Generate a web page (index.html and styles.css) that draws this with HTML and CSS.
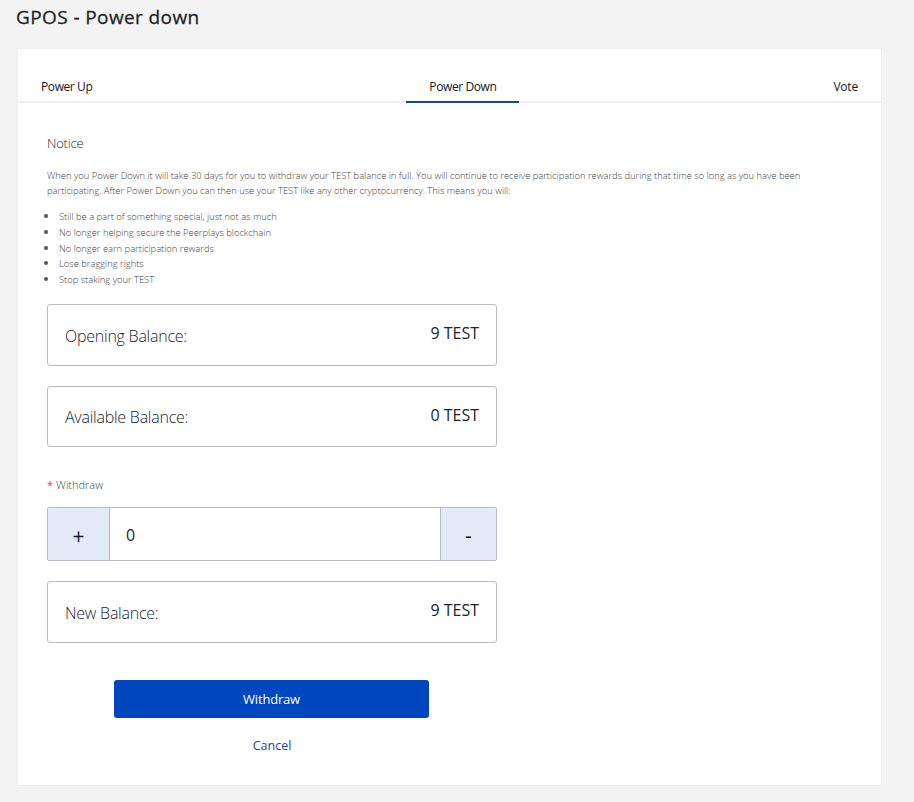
FILE: index.html
```html
<!DOCTYPE html>
<html lang="en">
<head>
<meta charset="utf-8">
<title>GPOS - Power down</title>
<link rel="stylesheet" href="styles.css">
</head>
<body>
<h1 class="title"><span>GPOS - Power down</span></h1>
<main class="card">
  <nav class="tabs">
    <a class="tab up">Power Up</a>
    <a class="tab down active">Power Down</a>
    <a class="tab vote">Vote</a>
  </nav>
  <section class="content">
    <h2 class="notice"><span>Notice</span></h2>
    <p class="copy"><span class="line-one">When you Power Down it will take 30 days for you to withdraw your TEST balance in full. You will continue to receive participation rewards during that time so long as you have been</span><br><span class="line-two">participating. After Power Down you can then use your TEST like any other cryptocurrency. This means you will:</span></p>
    <ul class="effects">
      <li><span>Still be a part of something special, just not as much</span></li>
      <li><span>No longer helping secure the Peerplays blockchain</span></li>
      <li><span>No longer earn participation rewards</span></li>
      <li><span>Lose bragging rights</span></li>
      <li><span>Stop staking your TEST</span></li>
    </ul>
    <form class="form">
      <div class="balance"><span class="name">Opening Balance:</span><span class="amount">9 TEST</span></div>
      <div class="balance available"><span class="name">Available Balance:</span><span class="amount">0 TEST</span></div>
      <label class="label"><span class="star">*</span><span>Withdraw</span></label>
      <div class="stepper">
        <button type="button" class="step plus">+</button>
        <div class="value">0</div>
        <button type="button" class="step minus">-</button>
      </div>
      <div class="balance"><span class="name">New Balance:</span><span class="amount">9 TEST</span></div>
      <button type="button" class="submit"><span>Withdraw</span></button>
      <a class="cancel"><span>Cancel</span></a>
    </form>
  </section>
</main>
</body>
</html>
```

FILE: styles.css
```css
* { box-sizing: border-box; }
body {
  margin: 0;
  height: 802px;
  overflow: hidden;
  background: #f3f3f3;
  color: #212529;
  font-family: "Open Sans", "Noto Sans", sans-serif;
}
.title {
  margin: 0;
  height: 48px;
  padding: 4px 0 0 16px;
  font-size: 19px;
  line-height: 26px;
  font-weight: 400;
  letter-spacing: 0.4px;
  -webkit-text-stroke: 0.3px #212529;
  white-space: nowrap;
}
.card {
  width: 865px;
  height: 738px;
  margin-left: 17px;
  background: #fff;
  border: 1px solid #efefef;
}
.tabs {
  height: 54px;
  display: flex;
  justify-content: space-between;
  align-items: flex-end;
  border-bottom: 2px solid #f0f0f0;
}
.tab {
  height: 32px;
  margin-bottom: -2px;
  padding: 0 23px;
  font-size: 12px;
  line-height: 32px;
  letter-spacing: -0.4px;
  white-space: nowrap;
  color: #16181c;
}
.vote { letter-spacing: -0.2px; }
.active { border-bottom: 2px solid #1c4590; }
.content { padding: 30px 29px 0; }
.notice {
  margin: 0;
  font-size: 13px;
  line-height: 20px;
  font-weight: 300;
  letter-spacing: -0.2px;
}
.copy {
  margin: 15px 0 0;
  font-size: 9.37px;
  line-height: 15px;
  font-weight: 300;
  white-space: nowrap;
  color: #3c3c3c;
}
.effects {
  margin: 11px 0 0;
  padding: 0 0 0 12px;
  font-size: 9.37px;
  line-height: 15.75px;
  font-weight: 300;
  color: #3c3c3c;
}
.effects li::marker { font-size: 12px; line-height: 1; color: #555; }
.form { width: 450px; margin-top: 16px; }
.balance {
  height: 62px;
  display: flex;
  justify-content: space-between;
  padding: 0 17px;
  border: 1px solid #bdbdbd;
  border-radius: 3px;
  font-size: 16px;
}
.available { height: 61px; margin-top: 20px; }
.name { padding-top: 20px; line-height: 22px; font-weight: 300; letter-spacing: -0.24px; }
.available .name { padding-top: 19px; }
.amount { padding-top: 17px; line-height: 22px; }
.label {
  display: flex;
  gap: 3px;
  margin-top: 28px;
  font-size: 11px;
  line-height: 20px;
  font-weight: 300;
  color: #444;
}
.star { color: #e8392f; font-weight: 400; }
.stepper {
  display: flex;
  height: 54px;
  margin: 12px 0 20px;
  border: 1px solid #b9bcc2;
  border-radius: 2px;
}
.step {
  width: 62px;
  padding: 4px 0 0;
  border: 0;
  border-right: 1px solid #b9bcc2;
  background: #e2e9f7;
  color: #111827;
  font: 400 21px/24px "Open Sans", sans-serif;
}
.minus { width: 56px; padding-top: 2px; border-right: 0; border-left: 1px solid #b9bcc2; }
.value { flex: 1; padding-left: 16px; font-size: 16px; line-height: 55px; }
.submit {
  display: block;
  width: 315px;
  height: 38px;
  margin: 37px 0 0 67px;
  padding: 0;
  border: 0;
  border-radius: 3px;
  background: #0046bf;
  color: #fff;
  font: 500 13px/38px "Open Sans", sans-serif;
  letter-spacing: -0.2px;
}
.cancel {
  display: block;
  margin-top: 18px;
  font-size: 12.5px;
  line-height: 20px;
  text-align: center;
  color: #233fa0;
}
```
